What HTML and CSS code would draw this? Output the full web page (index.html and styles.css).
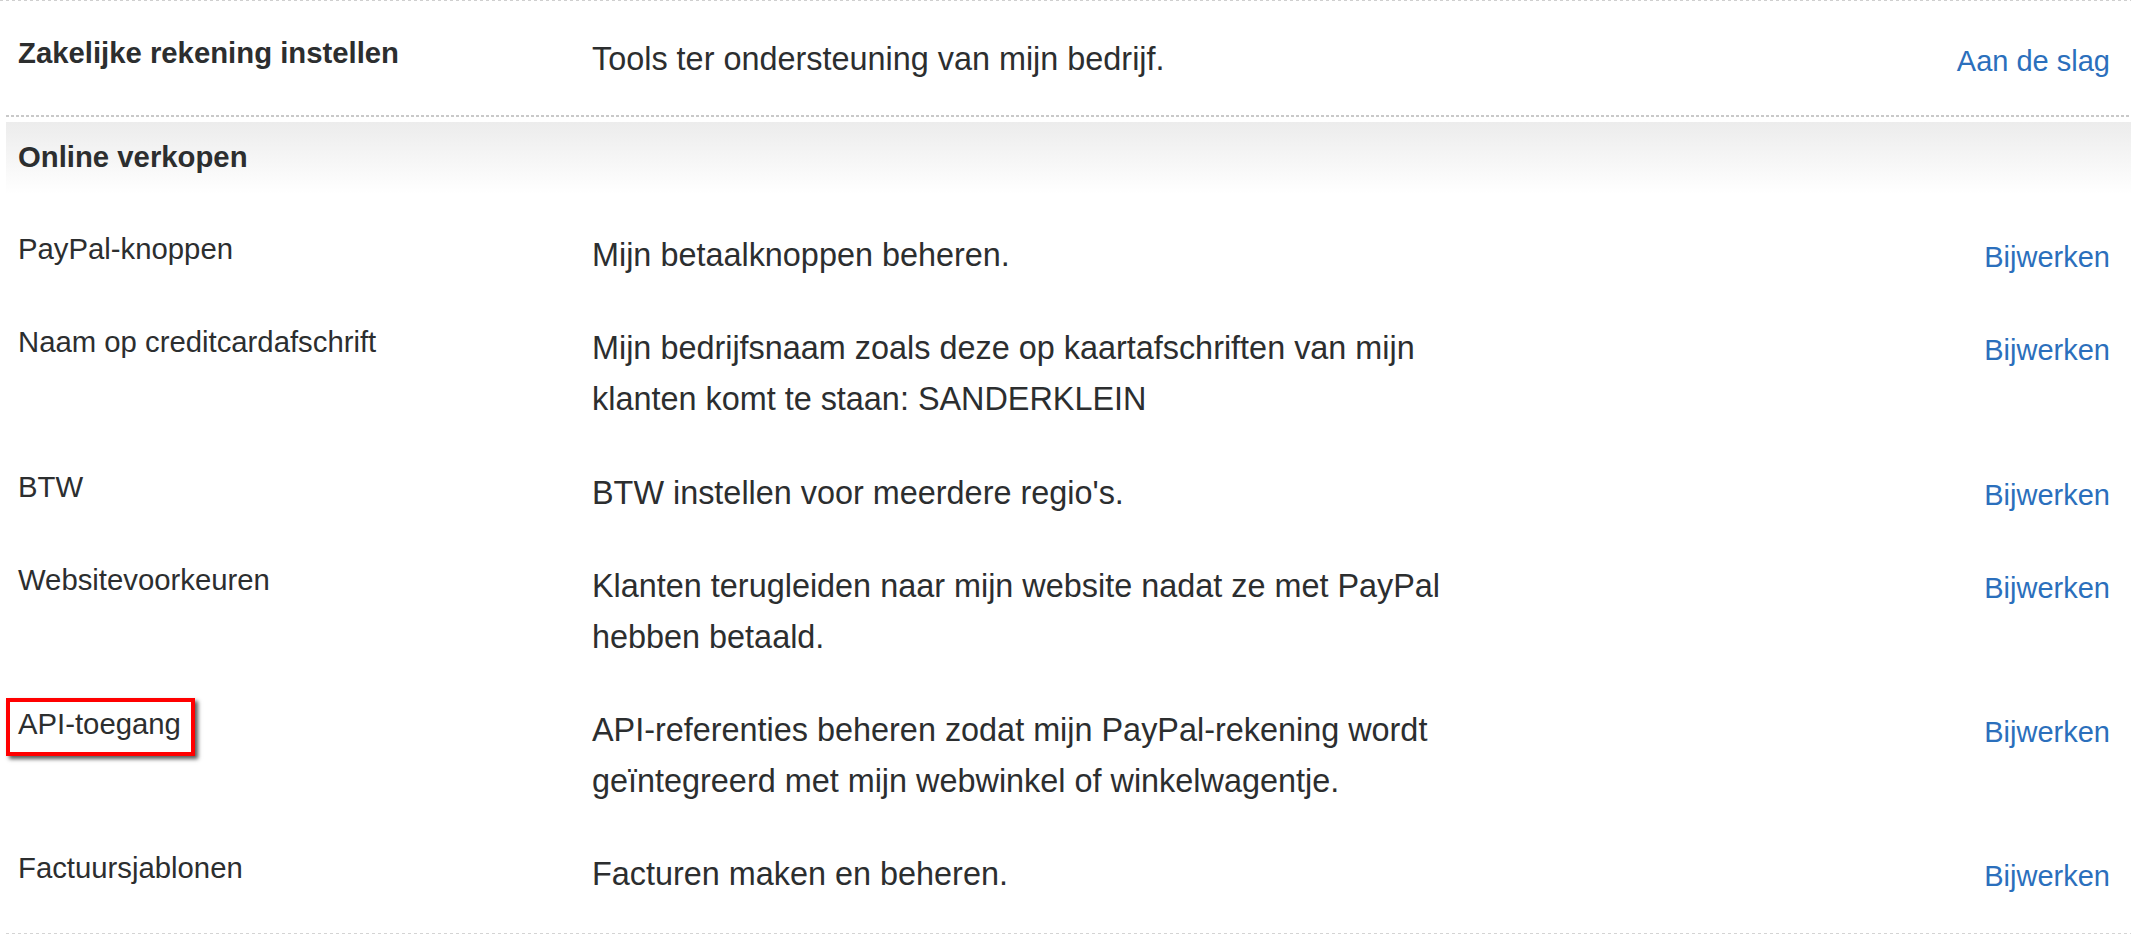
FILE: index.html
```html
<!DOCTYPE html>
<html>
<head>
    <meta charset="utf-8">
    <title>Verkopershulpmiddelen</title>
    <link rel="stylesheet" href="styles.css">
</head>

<body>
    <div class="settings">
        <div class="rule-top"></div>

        <div class="row intro">
            <div class="label">Zakelijke rekening instellen</div>
            <div class="desc">Tools ter ondersteuning van mijn bedrijf.</div>
            <a class="action" href="#">Aan de slag</a>
        </div>

        <div class="rule-dotted"></div>

        <h2 class="section-header">Online verkopen</h2>

        <div class="section-body">
            <div class="row">
                <div class="label">PayPal-knoppen</div>
                <div class="desc">Mijn betaalknoppen beheren.</div>
                <a class="action" href="#">Bijwerken</a>
            </div>
            <div class="row">
                <div class="label">Naam op creditcardafschrift</div>
                <div class="desc">Mijn bedrijfsnaam zoals deze op kaartafschriften van mijn klanten komt te staan: SANDERKLEIN</div>
                <a class="action" href="#">Bijwerken</a>
            </div>
            <div class="row">
                <div class="label">BTW</div>
                <div class="desc">BTW instellen voor meerdere regio's.</div>
                <a class="action" href="#">Bijwerken</a>
            </div>
            <div class="row">
                <div class="label">Websitevoorkeuren</div>
                <div class="desc">Klanten terugleiden naar mijn website nadat ze met PayPal hebben betaald.</div>
                <a class="action" href="#">Bijwerken</a>
            </div>
            <div class="row">
                <div class="label"><span class="marked">API-toegang</span></div>
                <div class="desc">API-referenties beheren zodat mijn PayPal-rekening wordt geïntegreerd met mijn webwinkel of winkelwagentje.</div>
                <a class="action" href="#">Bijwerken</a>
            </div>
            <div class="row">
                <div class="label">Factuursjablonen</div>
                <div class="desc">Facturen maken en beheren.</div>
                <a class="action" href="#">Bijwerken</a>
            </div>
        </div>

        <div class="rule-bottom"></div>
    </div>
</body>
</html>
```

FILE: styles.css
```css
body {
    margin: 0;
    background: #fff;
    color: #2c2e2f;
    font-family: "Liberation Sans", Arial, Helvetica, sans-serif;
}

.settings {
    margin: 0 10px 0 6px;
}

.rule-top {
    height: 1px;
    margin-left: -6px;
    background: repeating-linear-gradient(90deg, #cfcfcf 0 3px, transparent 3px 6px);
}

.rule-dotted {
    height: 2px;
    margin-bottom: 5px;
    background: repeating-linear-gradient(90deg, #c9c9c9 0 3px, transparent 3px 5px);
}

.rule-bottom {
    height: 1px;
    background: repeating-linear-gradient(90deg, #d4d4d4 0 3px, transparent 3px 6px);
}

.row {
    display: grid;
    grid-template-columns: 574px 880px 1fr;
    align-items: start;
    padding: 21px 21px 19.3px 12px;
}

.intro {
    padding-top: 31px;
    padding-bottom: 30px;
}

.section-body {
    padding-bottom: 13px;
}

.label {
    font-size: 29.3px;
    line-height: 42px;
}

.intro .label {
    font-weight: bold;
}

.desc {
    padding-top: 2px;
    font-size: 32.4px;
    line-height: 51px;
}

.action {
    justify-self: end;
    font-size: 29px;
    line-height: 51px;
    margin-top: 4px;
    margin-bottom: -4px;
    color: #2b6fbc;
    text-decoration: none;
}

.section-header {
    margin: 0;
    padding: 14px 12px 29px;
    font-size: 29.3px;
    line-height: 42px;
    font-weight: bold;
    background: linear-gradient(#ececec, #fff 72px);
}

.marked {
    display: inline-block;
    border: 4px solid #f00;
    padding: 1px 10px 7px 8px;
    margin: -5px -14px -11px -12px;
    box-shadow: 3px 3px 4px rgba(0, 0, 0, 0.65);
}
```
